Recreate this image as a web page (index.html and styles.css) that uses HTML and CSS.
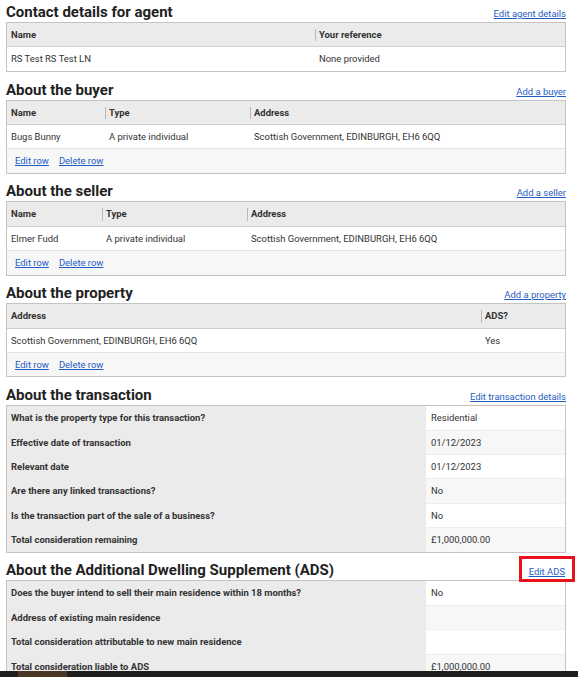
FILE: index.html
```html
<!DOCTYPE html>
<html lang="en">
<head>
<meta charset="utf-8">
<title>Return summary</title>
<link rel="stylesheet" href="styles.css">
</head>
<body>
<main class="page">

  <section class="section">
    <div class="section-head">
      <h2>Contact details for agent</h2>
      <a href="#" class="link">Edit agent details</a>
    </div>
    <table class="grid">
      <colgroup><col class="c-agent-name"><col></colgroup>
      <thead>
        <tr><th>Name</th><th>Your reference</th></tr>
      </thead>
      <tbody>
        <tr><td>RS Test RS Test LN</td><td>None provided</td></tr>
      </tbody>
    </table>
  </section>

  <section class="section">
    <div class="section-head">
      <h2>About the buyer</h2>
      <a href="#" class="link">Add a buyer</a>
    </div>
    <table class="grid">
      <colgroup><col class="c-buyer-name"><col class="c-buyer-type"><col></colgroup>
      <thead>
        <tr><th>Name</th><th>Type</th><th>Address</th></tr>
      </thead>
      <tbody>
        <tr><td>Bugs Bunny</td><td>A private individual</td><td>Scottish Government, EDINBURGH, EH6 6QQ</td></tr>
        <tr class="actions"><td colspan="3"><div class="action-links"><a href="#" class="link">Edit row</a><a href="#" class="link">Delete row</a></div></td></tr>
      </tbody>
    </table>
  </section>

  <section class="section">
    <div class="section-head">
      <h2>About the seller</h2>
      <a href="#" class="link">Add a seller</a>
    </div>
    <table class="grid">
      <colgroup><col class="c-seller-name"><col class="c-seller-type"><col></colgroup>
      <thead>
        <tr><th>Name</th><th>Type</th><th>Address</th></tr>
      </thead>
      <tbody>
        <tr><td>Elmer Fudd</td><td>A private individual</td><td>Scottish Government, EDINBURGH, EH6 6QQ</td></tr>
        <tr class="actions"><td colspan="3"><div class="action-links"><a href="#" class="link">Edit row</a><a href="#" class="link">Delete row</a></div></td></tr>
      </tbody>
    </table>
  </section>

  <section class="section">
    <div class="section-head">
      <h2>About the property</h2>
      <a href="#" class="link">Add a property</a>
    </div>
    <table class="grid">
      <colgroup><col class="c-prop-addr"><col></colgroup>
      <thead>
        <tr><th>Address</th><th>ADS?</th></tr>
      </thead>
      <tbody>
        <tr><td>Scottish Government, EDINBURGH, EH6 6QQ</td><td>Yes</td></tr>
        <tr class="actions"><td colspan="2"><div class="action-links"><a href="#" class="link">Edit row</a><a href="#" class="link">Delete row</a></div></td></tr>
      </tbody>
    </table>
  </section>

  <section class="section">
    <div class="section-head">
      <h2>About the transaction</h2>
      <a href="#" class="link">Edit transaction details</a>
    </div>
    <table class="summary">
      <colgroup><col class="c-question"><col></colgroup>
      <tbody>
        <tr><th>What is the property type for this transaction?</th><td>Residential</td></tr>
        <tr><th>Effective date of transaction</th><td>01/12/2023</td></tr>
        <tr><th>Relevant date</th><td>01/12/2023</td></tr>
        <tr><th>Are there any linked transactions?</th><td>No</td></tr>
        <tr><th>Is the transaction part of the sale of a business?</th><td>No</td></tr>
        <tr><th>Total consideration remaining</th><td>£1,000,000.00</td></tr>
      </tbody>
    </table>
  </section>

  <section class="section">
    <div class="section-head">
      <h2>About the Additional Dwelling Supplement (ADS)</h2>
      <a href="#" class="link highlighted">Edit ADS</a>
    </div>
    <table class="summary">
      <colgroup><col class="c-question"><col></colgroup>
      <tbody>
        <tr><th>Does the buyer intend to sell their main residence within 18 months?</th><td>No</td></tr>
        <tr><th>Address of existing main residence</th><td></td></tr>
        <tr><th>Total consideration attributable to new main residence</th><td></td></tr>
        <tr><th>Total consideration liable to ADS</th><td>£1,000,000.00</td></tr>
      </tbody>
    </table>
  </section>

</main>
<div class="taskbar"><span class="taskbar-item"></span></div>
</body>
</html>
```

FILE: styles.css
```css
* { box-sizing: border-box; }

html, body {
  margin: 0;
  background: #ffffff;
}

body {
  font-family: Roboto, "Liberation Sans", Arial, sans-serif;
  font-size: 9.45px;
  color: #333333;
  padding: 4px 12px 0 6px;
}

.page {
  display: flex;
  flex-direction: column;
  gap: 9.7px;
}

.section-head {
  display: flex;
  justify-content: space-between;
  align-items: baseline;
  height: 18px;
}

.section-head h2 {
  margin: 0;
  font-size: 15px;
  line-height: 16px;
  font-weight: 700;
  color: #222222;
}

.section-head .link {
  margin-top: -2px;
}

.link {
  color: #1f5cc4;
  text-decoration: underline;
  font-size: 9.45px;
  line-height: 12px;
}

.highlighted {
  position: relative;
  margin-right: 1px;
}

.highlighted::after {
  content: "";
  position: absolute;
  left: -10px;
  right: -10px;
  top: -10px;
  bottom: -4px;
  border: 3px solid #e8121c;
}

/* list tables */
.grid {
  width: 100%;
  table-layout: fixed;
  border-collapse: separate;
  border-spacing: 0;
  border: 1px solid #c4c4c4;
}

.grid th,
.grid td {
  text-align: left;
  padding: 5px 4px 4px;
  line-height: 14.4px;
  white-space: nowrap;
  overflow: hidden;
}

.grid th {
  position: relative;
  background: #ebebeb;
  font-weight: 700;
  color: #333333;
  border-bottom: 1px solid #cfcfcf;
}

.grid th + th::before {
  content: "";
  position: absolute;
  left: 0;
  top: 6px;
  bottom: 5px;
  width: 1px;
  background: #b9b9b9;
}

.grid tbody tr + tr td {
  border-top: 1px solid #e4e4e4;
}

.grid .actions td {
  background: #f7f7f7;
  padding-left: 8px;
}

.action-links {
  display: flex;
  align-items: baseline;
  gap: 10px;
  height: 14.4px;
  line-height: 14.4px;
}

.action-links .link {
  line-height: 14.4px;
}

.c-agent-name { width: 308px; }
.c-buyer-name { width: 98px; }
.c-buyer-type { width: 145px; }
.c-seller-name { width: 95px; }
.c-seller-type { width: 145px; }
.c-prop-addr { width: 474px; }
.c-question { width: 419px; }

/* summary tables */
.summary {
  width: 100%;
  table-layout: fixed;
  border-collapse: separate;
  border-spacing: 0;
  border: 1px solid #c4c4c4;
}

.summary th,
.summary td {
  text-align: left;
  padding: 5px 4px 4px;
  line-height: 14.4px;
  white-space: nowrap;
  overflow: hidden;
}

.summary th {
  background: #ebebeb;
  font-weight: 700;
  color: #333333;
}

.summary td {
  background: #ffffff;
  padding-left: 5px;
}

.summary tr:nth-child(even) td {
  background: #f7f7f7;
}

.summary tr + tr th {
  border-top: 1px solid #ebebeb;
}

.summary tr + tr td {
  border-top: 1px solid #eeeeee;
}

.taskbar {
  position: fixed;
  left: 0;
  right: 0;
  bottom: 0;
  height: 6px;
  background: #1e1e1e;
}

.taskbar-item {
  display: block;
  margin-left: 18px;
  width: 49px;
  height: 100%;
  background: #4a3826;
}
```
